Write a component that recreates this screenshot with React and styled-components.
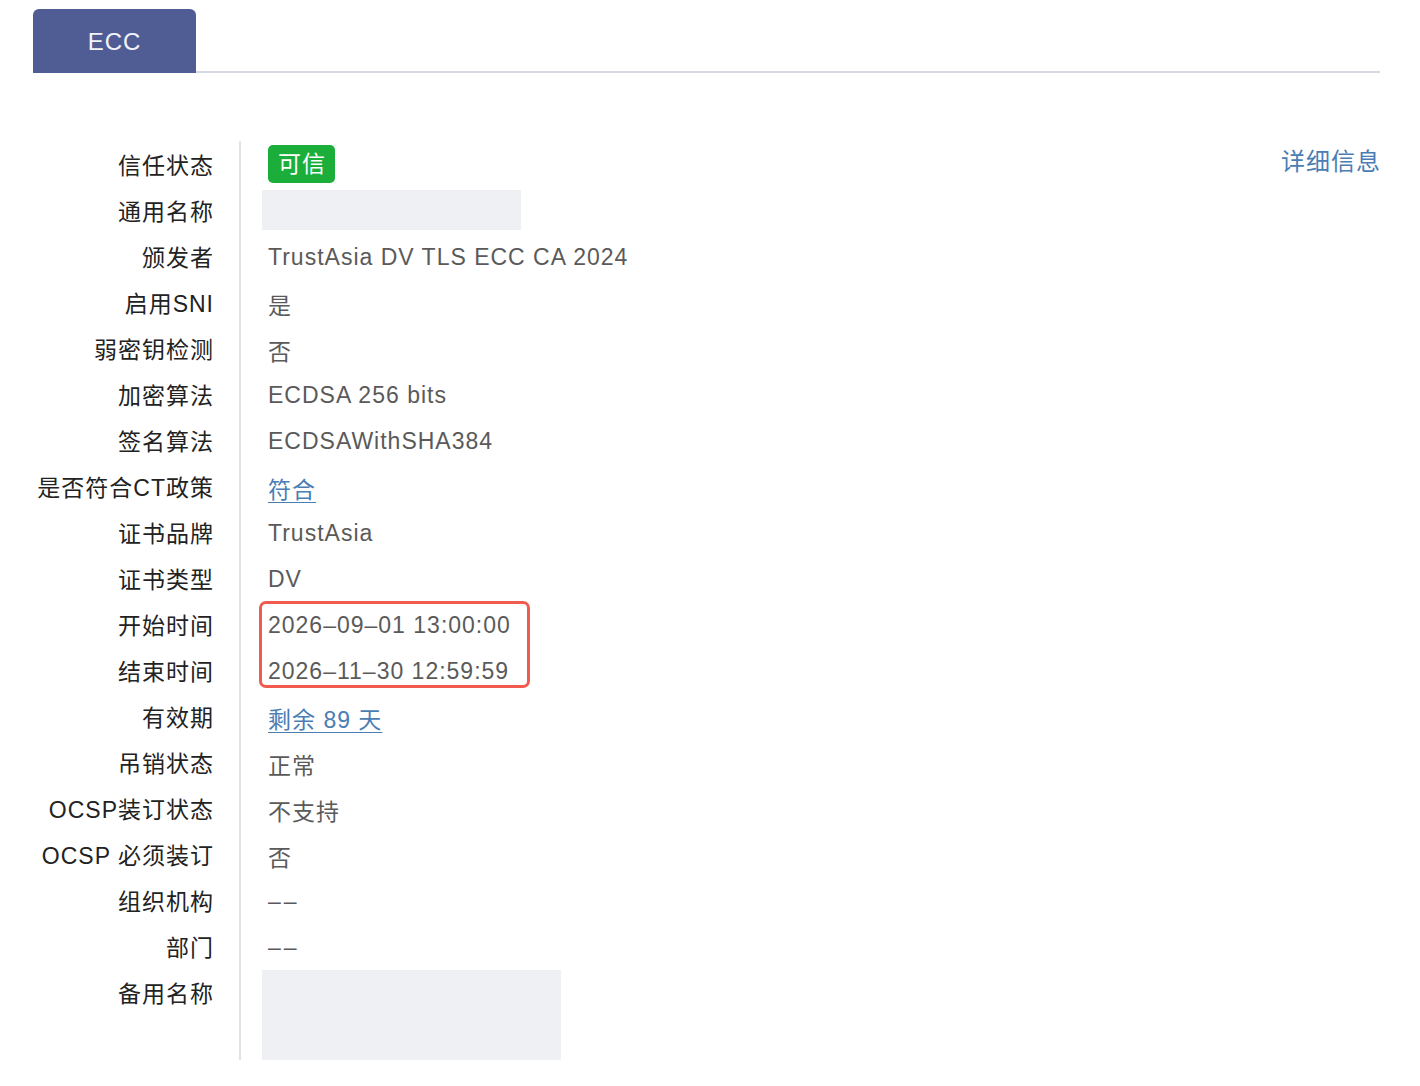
import React from "react";
import styled, { createGlobalStyle } from "styled-components";

const GlobalStyle = createGlobalStyle`
  body {
    margin: 0;
    background: #fff;
    font-family: "Liberation Sans", "Noto Sans CJK SC", sans-serif;
  }
`;

const Page = styled.div`
  padding: 9px 40px 0 33px;
`;

const TabBar = styled.div`
  display: flex;
  border-bottom: 2px solid #d6d8e4;
`;

const Tab = styled.div`
  width: 163px;
  height: 64px;
  display: flex;
  align-items: center;
  justify-content: center;
  padding-top: 2px;
  box-sizing: border-box;
  background: #4f5d94;
  color: #f2f3f8;
  font-size: 24px;
  letter-spacing: 1px;
  border-radius: 6px 6px 0 0;
  margin-bottom: -2px;
`;

const Detail = styled.div`
  position: relative;
  display: grid;
  grid-template-columns: 208px 1fr;
  margin-top: 68px;
  font-size: 23px;
  letter-spacing: 1px;
`;

const Labels = styled.div`
  display: flex;
  flex-direction: column;
  padding-right: 25px;
  border-right: 2px solid #e3e3e3;
`;

const Label = styled.div`
  height: 46px;
  line-height: 50px;
  text-align: right;
  color: #222;
  white-space: nowrap;
`;

const Values = styled.div`
  display: flex;
  flex-direction: column;
  padding-left: 27px;
`;

const Value = styled.div`
  height: 46px;
  box-sizing: border-box;
  padding-top: ${(p) => (p.flush ? 0 : 3)}px;
  display: flex;
  align-items: center;
  color: #5a5a5a;
  white-space: nowrap;
`;

const Empty = styled.span`
  letter-spacing: 3px;
`;

const Badge = styled.span`
  background: #1bae3b;
  color: #fff;
  border-radius: 5px;
  padding: 0 9px 0 10px;
  height: 38px;
  line-height: 38px;
`;

const Redacted = styled.div`
  width: ${(p) => p.w}px;
  height: ${(p) => p.h}px;
  background: #eef0f4;
  margin-left: -6px;
  margin-top: ${(p) => p.top || 0}px;
`;

const Link = styled.a`
  color: #4a7db4;
  text-decoration: underline;
  text-underline-offset: 4px;
  text-decoration-thickness: 1px;
`;

const Highlight = styled.div`
  position: relative;

  &::after {
    content: "";
    position: absolute;
    top: 0;
    bottom: 5px;
    left: -9px;
    width: 271px;
    border: 3px solid #f05a4f;
    border-radius: 7px;
    box-sizing: border-box;
  }
`;

const More = styled.a`
  position: absolute;
  right: -1px;
  top: 1px;
  color: #4a7db4;
  font-size: 24px;
`;

const labels = [
  "信任状态",
  "通用名称",
  "颁发者",
  "启用SNI",
  "弱密钥检测",
  "加密算法",
  "签名算法",
  "是否符合CT政策",
  "证书品牌",
  "证书类型",
  "开始时间",
  "结束时间",
  "有效期",
  "吊销状态",
  "OCSP装订状态",
  "OCSP 必须装订",
  "组织机构",
  "部门",
  "备用名称",
];

export default function App() {
  return (
    <Page>
      <GlobalStyle />
      <TabBar>
        <Tab>ECC</Tab>
      </TabBar>
      <Detail>
        <Labels>
          {labels.map((l) => (
            <Label key={l}>{l}</Label>
          ))}
        </Labels>
        <Values>
          <Value flush>
            <Badge>可信</Badge>
          </Value>
          <Value flush>
            <Redacted w={259} h={40} />
          </Value>
          <Value>TrustAsia DV TLS ECC CA 2024</Value>
          <Value>是</Value>
          <Value>否</Value>
          <Value>ECDSA 256 bits</Value>
          <Value>ECDSAWithSHA384</Value>
          <Value>
            <Link>符合</Link>
          </Value>
          <Value>TrustAsia</Value>
          <Value>DV</Value>
          <Highlight>
            <Value>2026–09–01 13:00:00</Value>
            <Value>2026–11–30 12:59:59</Value>
          </Highlight>
          <Value>
            <Link>剩余 89 天</Link>
          </Value>
          <Value>正常</Value>
          <Value>不支持</Value>
          <Value>否</Value>
          <Value>
            <Empty>––</Empty>
          </Value>
          <Value>
            <Empty>––</Empty>
          </Value>
          <Redacted w={299} h={90} top={1} />
        </Values>
        <More>详细信息</More>
      </Detail>
    </Page>
  );
}
